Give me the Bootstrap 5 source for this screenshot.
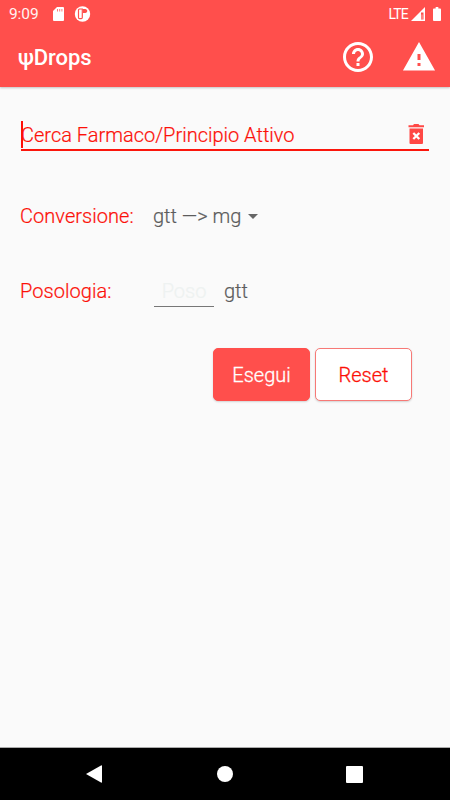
<!DOCTYPE html>
<html lang="it">
<head>
<meta charset="utf-8">
<meta name="viewport" content="width=device-width, initial-scale=1">
<title>ψDrops</title>
<link href="https://cdn.jsdelivr.net/npm/bootstrap@5.3.0/dist/css/bootstrap.min.css" rel="stylesheet">
<style>
  body { font-family: Roboto, "Noto Sans", sans-serif; background: #fafafa; height: 800px; font-size: 20px; line-height: 24px; font-weight: 300; color: #5c5c5c; overflow: hidden; -webkit-text-stroke: .2px; }
  svg { display: block; flex: none; }
  .app-top { background: #ff4f4c; height: 87px; box-shadow: 0 1px 2px rgba(0,0,0,.22); -webkit-text-stroke: 0; }
  .status-row { height: 27px; padding: 0 9px 0 9px; font-size: 15.5px; }
  .clock { width: 44px; font-weight: 400; opacity: .93; letter-spacing: -.1px; }
  .sim-icon { margin-left: 10px; }
  .net-label { font-size: 14px; letter-spacing: -.8px; font-weight: 400; margin-right: 3px; }
  .title-row { height: 60px; padding: 0 13px 0 18px; }
  .app-title { font-size: 22px; font-weight: 500; letter-spacing: -.1px; color: #fff; padding-top: 2px; }
  .warn-icon { margin-left: 25px; }
  .form-area { padding: 32px 21px 0 20px; }
  .red-text { color: #fc1008; }
  .search-box { height: 32px; margin-left: 1px; border-bottom: 2px solid #fb160c; }
  .search-text { padding-top: 1px; }
  .caret-line { width: 2px; height: 27px; background: #ff1008; margin-right: -2px; }
  .trash-icon { margin-right: 4px; }
  .field-label { width: 133px; letter-spacing: .05px; }
  .arrow-down { margin-left: 7px; }
  .conv-row { height: 24px; margin-top: 53px; }
  .poso-row { height: 32px; margin-top: 47px; }
  .poso-input { width: 60px; height: 31px; line-height: 31px; border-bottom: 1px solid #777; color: #eef2f1; margin: 0 10px 0 1px; }
  .actions { margin-top: 41px; padding-right: 17px; gap: 5px; }
  .act-btn { --bs-btn-border-radius: 5px; --bs-btn-font-size: 20px; --bs-btn-font-weight: 300; --bs-btn-padding-x: 0; width: 97px; height: 53px; box-shadow: 0 1px 2px rgba(0,0,0,.16); -webkit-text-stroke: .3px; }
  .act-run { --bs-btn-bg: #ff4f4c; --bs-btn-border-color: #ff4f4c; --bs-btn-color: #fff; }
  .act-reset { --bs-btn-bg: #fff; --bs-btn-border-color: #f77976; --bs-btn-color: #fc1008; }
  .nav-keys { height: 53px; border-top: 1px solid #aaa; padding: 0 87px 0 86px; }
  .home-key { margin-left: 1px; }
</style>
</head>
<body class="d-flex flex-column">
<header class="app-top text-white flex-shrink-0">
  <div class="status-row d-flex align-items-center">
    <span class="clock">9:09</span>
    <svg width="11" height="14" viewBox="0 0 11 14"><path d="M4 0H10Q11 0 11 1V13Q11 14 10 14H1Q0 14 0 13V4Z" fill="#fff"/><path d="M4.500 2V4.500M6.700 2V4.500M8.900 2V4.500" stroke="#ff7a78"/></svg>
    <svg class="sim-icon" width="17" height="16" viewBox="0 0 17 16"><circle cx="8.500" cy="8" r="7.700" fill="#fff"/><path d="M8.300 3H5.500Q4.500 3 4.500 4V11.500Q4.500 12.600 5.500 12.600H7.300Q8.300 12.600 8.300 11.500Z" fill="none" stroke="#ff4f4c" stroke-width="1.200"/><path d="M9 3H11.500Q13.300 3.500 13.300 5T11.500 7H9Z" fill="#ff4f4c"/></svg>
    <span class="net-label ms-auto">LTE</span>
    <svg width="14" height="14" viewBox="0 0 14 14"><path d="M14 0V14H0Z" fill="#fff"/><path d="M10 5.500H12.500V12.500H10Z" fill="#ff4f4c"/><path d="M11 7.500V12.500" stroke="#ffd0cf" stroke-width=".8"/></svg>
    <svg class="ms-2" width="8" height="14" viewBox="0 0 9 14" preserveAspectRatio="none"><path d="M3 0H6V1.500H8Q9 1.500 9 2.500V13Q9 14 8 14H1Q0 14 0 13V2.500Q0 1.500 1 1.500H3Z" fill="#fff"/></svg>
  </div>
  <nav class="title-row d-flex align-items-center">
    <span class="app-title me-auto">ψDrops</span>
    <svg width="36" height="36" viewBox="0 0 24 24" fill="#fff"><path d="M11 18h2v-2h-2v2zm1-16C6.480 2 2 6.480 2 12s4.480 10 10 10 10-4.480 10-10S17.520 2 12 2zm0 18c-4.410 0-8-3.590-8-8s3.590-8 8-8 8 3.590 8 8-3.590 8-8 8zm0-14c-2.210 0-4 1.790-4 4h2c0-1.100.9-2 2-2s2 .9 2 2c0 2-3 1.750-3 5h2c0-2.250 3-2.500 3-5 0-2.210-1.790-4-4-4z"/></svg>
    <svg class="warn-icon" width="36" height="36" viewBox="0 0 24 24"><path fill="#fff" d="M1.300 21h21.400L12 2 1.300 21zm11.700-3h-2v-2h2v2zm0-4h-2v-4h2v4z"/></svg>
  </nav>
</header>
<main class="form-area flex-grow-1">
  <div class="search-box red-text d-flex align-items-center">
    <span class="caret-line"></span><span class="search-text me-auto">Cerca Farmaco/Principio Attivo</span>
    <svg class="trash-icon" width="17" height="20" viewBox="0 0 17 20"><path d="M.5 1.200H5L6 0H10.500L11.500 1.200H16V3.200H.5ZM1.500 4.500H15V19Q15 20 14 20H2.500Q1.500 20 1.500 19Z" fill="#ff4845"/><path d="M5.300 9L11.300 15M11.300 9L5.300 15" stroke="#fff" stroke-width="2.300"/></svg>
  </div>
  <div class="conv-row d-flex align-items-center">
    <span class="field-label red-text">Conversione:</span><span>gtt —&gt; mg</span>
    <svg class="arrow-down" width="10" height="5" viewBox="0 0 10 5"><path d="M0 0H10L5 5Z" fill="#666"/></svg>
  </div>
  <div class="poso-row d-flex align-items-center">
    <span class="field-label red-text">Posologia:</span>
    <span class="poso-input text-center">Poso</span><span>gtt</span>
  </div>
  <div class="actions d-flex justify-content-end">
    <button class="btn act-btn act-run" type="button">Esegui</button>
    <button class="btn act-btn act-reset" type="button">Reset</button>
  </div>
</main>
<footer class="nav-keys bg-black d-flex align-items-center justify-content-between flex-shrink-0">
  <svg width="16" height="18" viewBox="0 0 16 18"><path d="M0 9L15 .5Q16 0 16 1V17Q16 18 15 17.500Z" fill="#fff"/></svg>
  <svg class="home-key" width="16" height="16" viewBox="0 0 16 16"><circle cx="8" cy="8" r="8" fill="#fff"/></svg>
  <svg width="17" height="17" viewBox="0 0 17 17"><rect width="17" height="17" rx="1" fill="#fff"/></svg>
</footer>
<script src="https://cdn.jsdelivr.net/npm/bootstrap@5.3.0/dist/js/bootstrap.bundle.min.js"></script>
</body>
</html>
